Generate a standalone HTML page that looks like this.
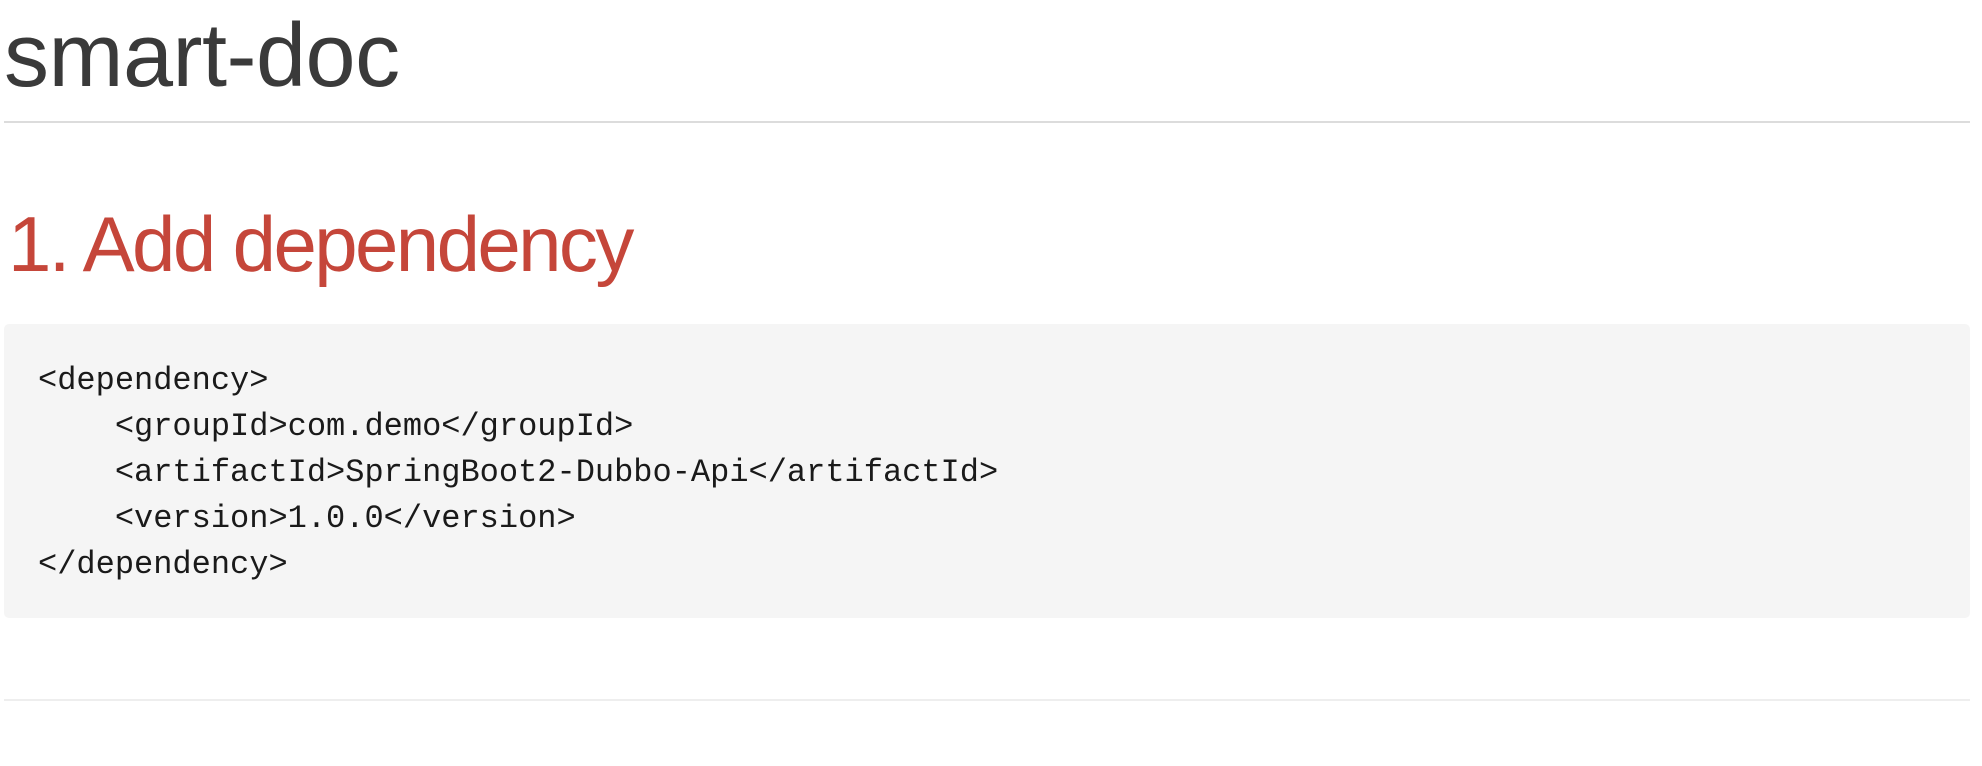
<!DOCTYPE html>
<html><head><meta charset="utf-8"><style>
html,body{margin:0;padding:0;background:#fff;width:1982px;height:766px;overflow:hidden;position:relative}
.t{position:absolute;left:4px;top:11px;font:300 90px/1 "Liberation Sans",sans-serif;color:#3a3a3a;margin:0;white-space:nowrap;letter-spacing:-0.5px}
.hr1{position:absolute;left:4px;width:1966px;top:121px;height:2px;background:#dcdcdc}
.h2{position:absolute;left:8px;top:205px;font:78px/1 "Liberation Sans",sans-serif;color:#c5463a;letter-spacing:-2.6px;margin:0;white-space:nowrap}
.code{position:absolute;left:4px;top:324px;width:1966px;height:294px;background:#f5f5f5;border-radius:5px;box-sizing:border-box;padding:34px 34px 30px;margin:0;font:32px/46px "Liberation Mono",monospace;color:#1a1a1a;white-space:pre}
.hr2{position:absolute;left:4px;width:1966px;top:699px;height:2px;background:#eee}
</style></head><body>
<h1 class="t">smart-doc</h1>
<div class="hr1"></div>
<h2 class="h2">1. Add dependency</h2>
<pre class="code">&lt;dependency&gt;
    &lt;groupId&gt;com.demo&lt;/groupId&gt;
    &lt;artifactId&gt;SpringBoot2-Dubbo-Api&lt;/artifactId&gt;
    &lt;version&gt;1.0.0&lt;/version&gt;
&lt;/dependency&gt;</pre>
<div class="hr2"></div>
</body></html>
